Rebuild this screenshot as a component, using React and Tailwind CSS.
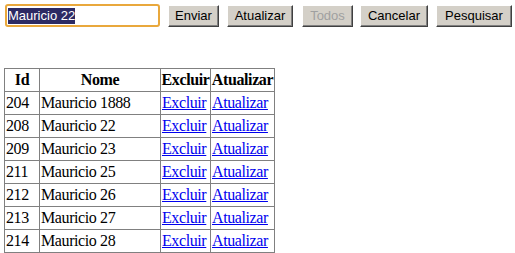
const rows = [
  { id: 204, nome: "Mauricio 1888" },
  { id: 208, nome: "Mauricio 22" },
  { id: 209, nome: "Mauricio 23" },
  { id: 211, nome: "Mauricio 25" },
  { id: 212, nome: "Mauricio 26" },
  { id: 213, nome: "Mauricio 27" },
  { id: 214, nome: "Mauricio 28" },
];

function Botao({ children, disabled, className = "" }) {
  return (
    <button
      type="button"
      disabled={disabled}
      className={`h-[22px] px-0 bg-[#d4d0c8] border border-t-white border-l-white border-r-[#404040] border-b-[#404040] shadow-[inset_-1px_-1px_0_#808080] text-[13px] leading-none ${
        disabled ? "text-[#a0a0a0]" : "text-black"
      } ${className}`}
    >
      {children}
    </button>
  );
}

export default function App() {
  return (
    <div className="min-h-screen bg-white pt-[4px] pl-[4px] font-['Liberation_Serif',serif] text-black">
      <div className="flex items-center font-['Liberation_Sans',Arial,sans-serif]">
        <div className="w-[155px] h-[23px] ml-[1px] rounded-[3px] border-2 border-[#e9a83c] bg-white flex items-center pl-[1px]">
          <span className="bg-[#2c2a63] text-white text-[13px] leading-[16px]">Mauricio 22</span>
        </div>
        <Botao className="ml-[8px] w-[51px]">Enviar</Botao>
        <Botao className="ml-[8px] w-[66px]">Atualizar</Botao>
        <Botao disabled className="ml-[9px] w-[51px]">Todos</Botao>
        <Botao className="ml-[7px] w-[68px]">Cancelar</Botao>
        <Botao className="ml-[8px] w-[76px]">Pesquisar</Botao>
      </div>

      <table className="mt-[41px] table-fixed w-[270px] border-collapse border border-[#808080] text-[16px] leading-[20px] tracking-[-0.4px]">
        <colgroup>
          <col className="w-[35px]" />
          <col className="w-[121px]" />
          <col className="w-[50px]" />
          <col className="w-[64px]" />
        </colgroup>
        <thead>
          <tr>
            <th className="border border-[#808080] p-0 py-[1px] font-bold whitespace-nowrap">Id</th>
            <th className="border border-[#808080] p-0 py-[1px] font-bold whitespace-nowrap">Nome</th>
            <th className="border border-[#808080] p-0 py-[1px] font-bold whitespace-nowrap">Excluir</th>
            <th className="border border-[#808080] p-0 py-[1px] font-bold whitespace-nowrap">Atualizar</th>
          </tr>
        </thead>
        <tbody>
          {rows.map((r) => (
            <tr key={r.id}>
              <td className="border border-[#808080] px-[1px] py-[1px] whitespace-nowrap">{r.id}</td>
              <td className="border border-[#808080] px-[1px] py-[1px] whitespace-nowrap">{r.nome}</td>
              <td className="border border-[#808080] px-[1px] py-[1px] whitespace-nowrap">
                <a href="#" className="text-[#0000ee] underline">Excluir</a>
              </td>
              <td className="border border-[#808080] px-[1px] py-[1px] whitespace-nowrap">
                <a href="#" className="text-[#0000ee] underline">Atualizar</a>
              </td>
            </tr>
          ))}
        </tbody>
      </table>
    </div>
  );
}
